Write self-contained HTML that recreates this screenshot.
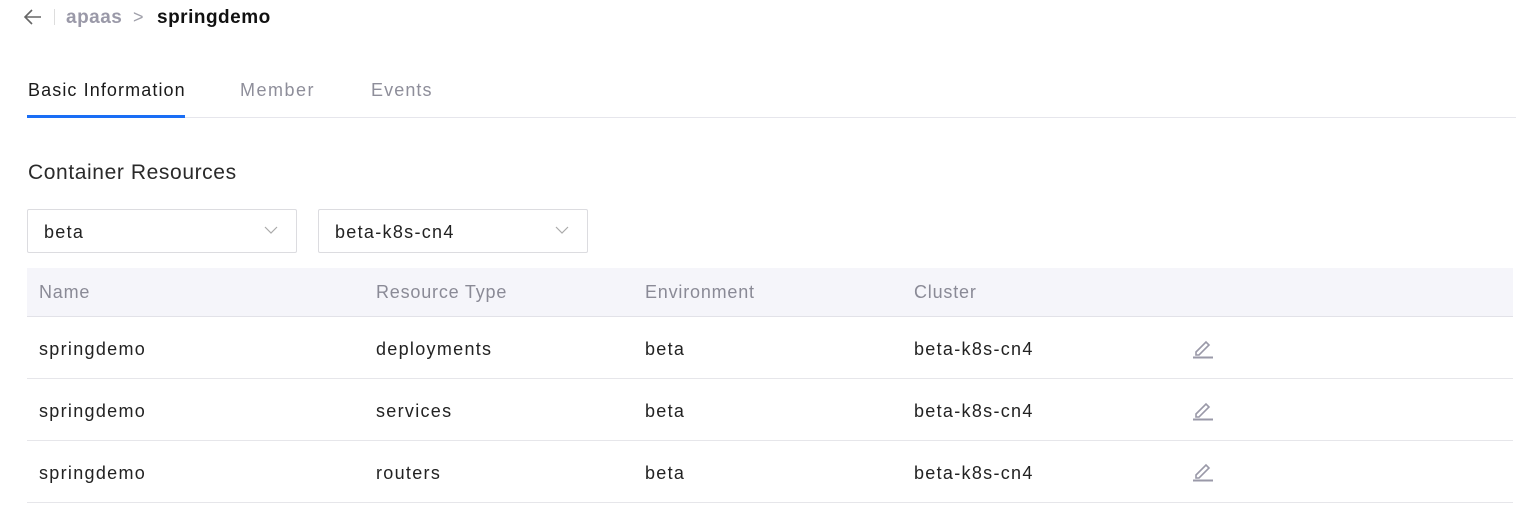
<!DOCTYPE html>
<html><head><style>
*{margin:0;padding:0;box-sizing:border-box}
body{width:1516px;height:505px;background:#fff;font-family:"Liberation Sans",sans-serif;position:relative;overflow:hidden;color:#1f1f1f}
.a{position:absolute;white-space:nowrap}
.sel{position:absolute;top:209px;height:44px;width:270px;border:1px solid #dcdce0;border-radius:2px;font-size:18px;line-height:44px;padding-left:16px;color:#222;letter-spacing:1.3px}
.sel svg{position:absolute;right:18px;top:16px}
.row{position:absolute;left:27px;width:1486px;height:62px;border-bottom:1px solid #e6e6ea;font-size:18px;color:#222;letter-spacing:1.3px}
.row span{position:absolute;top:22px}
.hd{background:#f5f5fa;height:49px;top:268px;border-bottom:1px solid #e2e2e8;color:#8a8a96;letter-spacing:0.8px}
.hd span{top:14px}
.tab{font-size:18px;letter-spacing:1.1px}
</style></head><body>
<svg class="a" style="left:23px;top:8px" width="20" height="18" viewBox="0 0 20 18"><path d="M18 9H3M9 2L2 9l7 7" fill="none" stroke="#666" stroke-width="1.6"/></svg>
<div class="a" style="left:54px;top:9px;width:1px;height:16px;background:#ddd"></div>
<div class="a" style="left:66px;top:7px;font-size:19px;font-weight:bold;color:#9a99a8;letter-spacing:0.5px">apaas</div>
<div class="a" style="left:133px;top:7px;font-size:18px;color:#a0a0aa">&gt;</div>
<div class="a" style="left:157px;top:7px;font-size:19px;font-weight:bold;color:#111;letter-spacing:0.5px">springdemo</div>
<div class="a tab" style="left:28px;top:80px;color:#1a1a1a">Basic Information</div>
<div class="a tab" style="left:240px;top:80px;color:#8e8e9a;letter-spacing:1.5px">Member</div>
<div class="a tab" style="left:371px;top:80px;color:#8e8e9a;letter-spacing:1.1px">Events</div>
<div class="a" style="left:27px;top:117px;width:1489px;height:1px;background:#e6e6ec"></div>
<div class="a" style="left:27px;top:115px;width:158px;height:3px;background:#1a6ef5"></div>
<div class="a" style="left:28px;top:161px;font-size:21px;color:#2a2a2a;letter-spacing:0.6px">Container Resources</div>
<div class="sel" style="left:27px">beta<svg width="14" height="9" viewBox="0 0 14 9"><path d="M1 1l6 6 6-6" fill="none" stroke="#aaa" stroke-width="1.2"/></svg></div>
<div class="sel" style="left:318px">beta-k8s-cn4<svg width="14" height="9" viewBox="0 0 14 9"><path d="M1 1l6 6 6-6" fill="none" stroke="#aaa" stroke-width="1.2"/></svg></div>
<div class="row hd"><span style="left:12px">Name</span><span style="left:349px">Resource Type</span><span style="left:618px">Environment</span><span style="left:887px">Cluster</span></div>
<div class="row" style="top:317px"><span style="left:12px">springdemo</span><span style="left:349px">deployments</span><span style="left:618px">beta</span><span style="left:887px">beta-k8s-cn4</span></div>
<div class="row" style="top:379px"><span style="left:12px">springdemo</span><span style="left:349px">services</span><span style="left:618px">beta</span><span style="left:887px">beta-k8s-cn4</span></div>
<div class="row" style="top:441px"><span style="left:12px">springdemo</span><span style="left:349px">routers</span><span style="left:618px">beta</span><span style="left:887px">beta-k8s-cn4</span></div>
<svg class="a" style="left:1192px;top:337px" width="22" height="22" viewBox="0 0 22 22"><path d="M4 15l10-10 3 3-10 10H4z" fill="none" stroke="#9a99a8" stroke-width="1.6"/><path d="M1 20.5h20" stroke="#9a99a8" stroke-width="2"/></svg>
<svg class="a" style="left:1192px;top:399px" width="22" height="22" viewBox="0 0 22 22"><path d="M4 15l10-10 3 3-10 10H4z" fill="none" stroke="#9a99a8" stroke-width="1.6"/><path d="M1 20.5h20" stroke="#9a99a8" stroke-width="2"/></svg>
<svg class="a" style="left:1192px;top:460px" width="22" height="22" viewBox="0 0 22 22"><path d="M4 15l10-10 3 3-10 10H4z" fill="none" stroke="#9a99a8" stroke-width="1.6"/><path d="M1 20.5h20" stroke="#9a99a8" stroke-width="2"/></svg>
</body></html>
